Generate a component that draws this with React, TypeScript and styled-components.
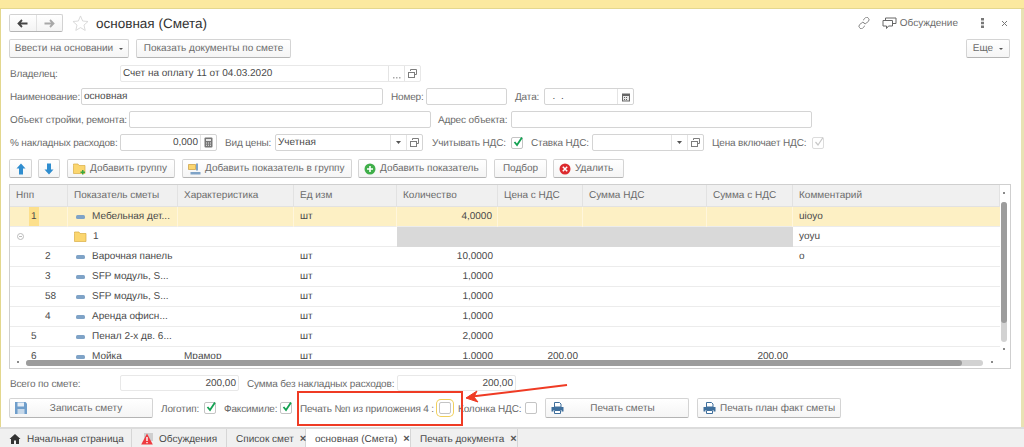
import React, { FC, ReactNode } from 'react';
import styled, { createGlobalStyle } from 'styled-components';

const TEXT = '#4a4a4a';
const LABEL = '#6b6b6b';
const BORDER = '#d4d4d4';

const GlobalStyle = createGlobalStyle`
  html, body {
    margin: 0;
    padding: 0;
    background: #fff;
  }
  body {
    width: 1024px;
    height: 447px;
    overflow: hidden;
    font-family: "Liberation Sans", Arial, sans-serif;
    font-size: 10px;
    text-rendering: geometricPrecision;
    color: ${TEXT};
  }
`;

const Page = styled.div`
  position: relative;
  width: 1024px;
  height: 447px;
  overflow: hidden;
  display: flex;
  flex-direction: column;
`;

const TopStrip = styled.div`
  height: 8px;
  flex: none;
  background: #fbe99f;
  border-bottom: 1px solid #e3d78e;
`;

const Body = styled.div`
  flex: 1;
  min-height: 0;
  border-left: 1px solid #e3d78e;
  border-right: 3px solid #e8e2b4;
  padding: 5px 10px 0 8px;
  display: flex;
  flex-direction: column;
`;

const HeaderRow = styled.div`
  height: 18px;
  display: flex;
  align-items: center;
`;

const NavGroup = styled.div`
  width: 54px;
  height: 18px;
  box-sizing: border-box;
  display: flex;
  border: 1px solid #d2d2d2;
  border-bottom-color: #b5b5b5;
  border-radius: 2px;
  background: linear-gradient(#fff, #f4f4f4);
`;

const NavButton = styled.div<{ $divider?: boolean }>`
  flex: 1;
  display: flex;
  align-items: center;
  justify-content: center;
  border-left: ${p => (p.$divider ? '1px solid #e2e2e2' : 'none')};
`;

const Title = styled.div`
  margin-left: 7px;
  font-size: 13.5px;
  color: #333;
`;

const HeaderSide = styled.div`
  margin-left: auto;
  display: flex;
  align-items: center;
  height: 18px;
`;

const HeaderLink = styled.span`
  margin-left: 3px;
  color: ${LABEL};
`;

const Row = styled.div<{ $top: number; $h?: number }>`
  display: flex;
  align-items: center;
  margin-top: ${p => p.$top}px;
  height: ${p => p.$h ?? 17}px;
  flex: none;
`;

const Label = styled.span<{ $w?: number; $ml?: number }>`
  flex: none;
  width: ${p => (p.$w ? `${p.$w}px` : 'auto')};
  margin-left: ${p => p.$ml ?? 0}px;
  margin-top: 2px;
  color: ${LABEL};
  letter-spacing: -0.15px;
  white-space: nowrap;
`;

const Field = styled.div<{ $w: number; $soft?: boolean }>`
  flex: none;
  width: ${p => p.$w}px;
  height: 100%;
  box-sizing: border-box;
  display: flex;
  align-items: stretch;
  background: #fff;
  border: 1px solid ${p => (p.$soft ? '#e8e8e8' : BORDER)};
  border-radius: 2px;
`;

const FieldText = styled.span<{ $right?: boolean }>`
  flex: 1;
  min-width: 0;
  padding: 0 2px;
  line-height: 16px;
  text-align: ${p => (p.$right ? 'right' : 'left')};
  color: ${TEXT};
  white-space: nowrap;
`;

const FieldButton = styled.span`
  flex: none;
  width: 15px;
  display: flex;
  align-items: center;
  justify-content: center;
  border-left: 1px solid #e4e4e4;
  color: #777;
`;

const Check = styled.span<{ $off?: boolean; $focus?: boolean }>`
  flex: none;
  position: relative;
  width: 12px;
  height: 12px;
  box-sizing: border-box;
  background: #fff;
  border: 1px solid ${p => (p.$off ? '#dcdcdc' : '#c4c4c4')};
  border-radius: 2px;
  box-shadow: ${p => (p.$focus ? '0 0 0 2px #fff, 0 0 0 3px #f0cf5a' : 'none')};
`;

const CheckMark = styled.svg`
  position: absolute;
  left: 0;
  top: -2px;
`;

const Button = styled.div<{ $w: number; $ml?: number; $center?: boolean }>`
  flex: none;
  width: ${p => p.$w}px;
  height: 100%;
  margin-left: ${p => p.$ml ?? 0}px;
  box-sizing: border-box;
  display: flex;
  align-items: center;
  justify-content: ${p => (p.$center ? 'center' : 'flex-start')};
  gap: 4px;
  padding: ${p => (p.$center ? '0' : '0 5px')};
  color: ${LABEL};
  background: linear-gradient(#fff, #f5f5f5);
  border: 1px solid #d4d4d4;
  border-bottom-color: #b4b4b4;
  border-radius: 2px;
  white-space: nowrap;

  svg {
    flex: none;
  }
`;

const ButtonText = styled.span`
  flex: 1;
  padding-right: 6px;
  text-align: center;
`;

const Caret = styled.span`
  display: inline-block;
  width: 0;
  height: 0;
  margin-left: 2px;
  border-left: 2px solid transparent;
  border-right: 2px solid transparent;
  border-top: 2px solid #555;
`;

const Table = styled.div`
  position: relative;
  margin-top: 6px;
  width: 1002px;
  height: 185px;
  flex: none;
  box-sizing: border-box;
  border: 1px solid #cfcfcf;
  overflow: hidden;
  background: #fff;
`;

const columns = '58px 110px 116px 103px 101px 85px 124px 86px 207px';

const HeadRow = styled.div`
  display: grid;
  grid-template-columns: ${columns};
  width: 990px;
  height: 21px;
  background: #f0f0f0;
  border-bottom: 1px solid #e2e2e2;
`;

const HeadCell = styled.div`
  padding-left: 6px;
  line-height: 21px;
  color: ${LABEL};
  border-right: 1px solid #e2e2e2;
  white-space: nowrap;
`;

const DataRow = styled.div<{ $active?: boolean }>`
  display: grid;
  grid-template-columns: ${columns};
  width: 990px;
  height: 20px;
  box-sizing: border-box;
  border-bottom: 1px solid #ececec;
  background: ${p => (p.$active ? '#fdf0c4' : '#fff')};
`;

const Cell = styled.div<{ $right?: boolean; $grey?: boolean; $active?: boolean }>`
  min-width: 0;
  height: 20px;
  display: flex;
  align-items: center;
  justify-content: ${p => (p.$right ? 'flex-end' : 'flex-start')};
  padding: ${p => (p.$right ? '0 5px 1px 0' : '0 0 1px 6px')};
  background: ${p => (p.$grey ? '#d9d9d9' : 'transparent')};
  border-right: ${p => (p.$active ? '1px solid #fff6dc' : 'none')};
  white-space: nowrap;
  overflow: hidden;
  box-sizing: border-box;
`;

const NumberText = styled.span<{ $indent: number; $mark?: boolean }>`
  margin-left: ${p => p.$indent}px;
  padding: 0 2px;
  line-height: 19px;
  background: ${p => (p.$mark ? '#fde08c' : 'transparent')};
`;

const RowIcon = styled.span`
  flex: none;
  width: 9px;
  height: 4px;
  margin: 0 7px 0 2px;
  border-radius: 1.5px;
  background: #7fa3c7;
`;

const GroupName = styled.span`
  margin-left: 6px;
`;

const ScrollFooter = styled.div`
  position: absolute;
  left: 0;
  right: 0;
  bottom: 0;
  height: 9px;
  background: #fff;
`;

const ScrollTrack = styled.div<{ $vertical?: boolean }>`
  position: absolute;
  background: #d2d2d2;
  border-radius: 3px;
  ${p =>
    p.$vertical
      ? 'right: 3px; top: 17px; width: 6px; height: 140px;'
      : 'left: 16px; bottom: 2px; width: 957px; height: 6px;'}
`;

const ScrollThumb = styled.div<{ $vertical?: boolean }>`
  background: #9c9c9c;
  border-radius: 3px;
  ${p => (p.$vertical ? 'width: 6px; height: 121px;' : 'width: 936px; height: 6px;')}
`;

const ScrollArrow = styled.span<{ $x: number; $y: number }>`
  position: absolute;
  left: ${p => p.$x}px;
  top: ${p => p.$y}px;
  width: 2px;
  height: 2px;
  background: #8a8a8a;
`;

const TabBar = styled.div`
  flex: none;
  height: 18px;
  display: flex;
  background: #f0f0f0;
  border-top: 2px solid #dcdcdc;
`;

const Tab = styled.div<{ $w: number; $active?: boolean }>`
  flex: none;
  width: ${p => p.$w}px;
  box-sizing: border-box;
  display: flex;
  align-items: center;
  padding: 2px 0 0 9px;
  gap: 6px;
  color: ${TEXT};
  background: ${p => (p.$active ? '#fff' : 'transparent')};
  border-right: 1px solid #d6d6d6;
  white-space: nowrap;

  svg {
    flex: none;
  }
`;

const TabClose = styled.span`
  font-size: 11px;
  font-weight: bold;
  color: #555;
`;

const Callout = styled.div`
  position: absolute;
  left: 297px;
  top: 391px;
  width: 166px;
  height: 35px;
  box-sizing: border-box;
  border: 2px solid #ef3b24;
  pointer-events: none;
`;

const CalloutArrow = styled.svg`
  position: absolute;
  left: 460px;
  top: 380px;
`;

const DotsIcon = () => (
  <svg width="14" height="14" viewBox="0 0 14 14">
    <path d="M3 10h1.500v1.500H3zM6 10h1.500v1.500H6zM9 10h1.500v1.500H9z" fill="#aaa" />
  </svg>
);

const CopyIcon = () => (
  <svg width="11" height="11" viewBox="0 0 11 11" fill="none" stroke="#7d7d7d">
    <path d="M3.500 3V1.500h6v5H7.500" />
    <rect x="1.500" y="4.500" width="6" height="5" fill="#fff" />
  </svg>
);

const DownIcon = () => (
  <svg width="7" height="5" viewBox="0 0 7 5">
    <path d="M1 1h5L3.500 4z" fill="#555" />
  </svg>
);

const CalendarIcon = () => (
  <svg width="10" height="10" viewBox="0 0 10 10">
    <path d="M1 1.500h8v8H1z" fill="#666" />
    <path d="M2 4h6v4.500H2z" fill="#e8e8e8" />
    <path d="M3 5h1v1H3zM5 5h1v1H5zM3 7h1v1H3zM5 7h1v1H5z" fill="#666" />
  </svg>
);

const CalcIcon = () => (
  <svg width="9" height="11" viewBox="0 0 9 11">
    <rect x="0.500" y="0.500" width="8" height="10" rx="1" fill="#777" />
    <path d="M2 2h5v2H2z" fill="#e6e6e6" />
    <path d="M2 5.500h1v1H2zM4 5.500h1v1H4zM6 5.500h1v1H6zM2 7.800h1v1H2zM4 7.800h1v1H4zM6 7.800h1v1H6z" fill="#eee" />
  </svg>
);

const ArrowIcon: FC<{ left?: boolean; color: string }> = ({ left, color }) => (
  <svg width="11" height="9" viewBox="0 0 11 9" style={left ? undefined : { transform: 'scaleX(-1)' }}>
    <path d="M5 1L1.500 4.500 5 8M2 4.500h8.500" fill="none" stroke={color} strokeWidth="1.800" />
  </svg>
);

const StarIcon = () => (
  <svg width="17" height="16" viewBox="0 0 18 17" style={{ marginLeft: 9 }}>
    <path d="M9 1l2.300 5.400 5.700.5-4.300 3.800 1.300 5.700L9 13.400l-5 3 1.300-5.700L1 6.900l5.700-.5z" fill="none" stroke="#d8d8d8" />
  </svg>
);

const LinkIcon = () => (
  <svg width="12" height="12" viewBox="0 0 13 13" fill="none" stroke="#777" strokeWidth="1">
    <path d="M5.500 3.500l2-2a2.100 2.100 0 0 1 3.800 0 2.100 2.100 0 0 1 0 3l-2 2a2 2 0 0 1-3 0" />
    <path d="M7.500 9.500l-2 2a2.100 2.100 0 0 1-3.800 0 2.100 2.100 0 0 1 0-3l2-2a2 2 0 0 1 3 0" />
  </svg>
);

const TalkIcon = () => (
  <svg width="15" height="13" viewBox="0 0 15 13" fill="none" stroke="#666" strokeWidth="1" style={{ marginLeft: 12 }}>
    <path d="M1 3.500h9.500v5.500H6.500L4.500 11.500V9H1z" />
    <path d="M3.500 3.500V1h10.500v5.500H10.500" />
  </svg>
);

const KebabIcon = () => (
  <svg width="3" height="10" viewBox="0 0 3 10" style={{ marginLeft: 23 }}>
    <path d="M0 0h3v2.500H0zM0 3.700h3v2.500H0zM0 7.500h3V10H0z" fill="#777" />
  </svg>
);

const CloseIcon = () => (
  <svg width="7" height="7" viewBox="0 0 7 7" style={{ marginLeft: 17, marginRight: 3 }}>
    <path d="M1 1l5 5M6 1L1 6" stroke="#777" strokeWidth="1" />
  </svg>
);

const BlueArrow: FC<{ up?: boolean }> = ({ up }) => (
  <svg width="10" height="12" viewBox="0 0 10 12" style={up ? undefined : { transform: 'scaleY(-1)' }}>
    <path d="M5 0.500L9.500 5.500H7V11.500H3V5.500H0.500z" fill="#2f8dcf" />
  </svg>
);

const FolderIcon: FC<{ plus?: boolean }> = ({ plus }) => (
  <svg width="13" height="12" viewBox="0 0 13 12">
    <path d="M0.500 2.500V1h4.500l1 1.500h6v8h-11.500z" fill="#fbd66f" stroke="#d9ae45" strokeWidth="0.700" />
    {plus && <path d="M7.500 8.500h1.500V7h1.500v1.500H12V10h-1.500v1.500H9V10H7.500z" fill="#3aa83f" />}
  </svg>
);

const GroupIcon = () => (
  <svg width="13" height="12" viewBox="0 0 13 12">
    <path d="M0.500 1.500h7v5h-7z" fill="#fbd66f" stroke="#c99c3c" strokeWidth="0.700" />
    <path d="M9 0.500v7" stroke="#4b7fb0" strokeWidth="1.400" />
    <path d="M2.500 9h10v2.500h-10z" fill="#7fa3c7" />
  </svg>
);

const RoundIcon: FC<{ color: string; children: ReactNode }> = ({ color, children }) => (
  <svg width="12" height="12" viewBox="0 0 12 12">
    <circle cx="6" cy="6" r="5.500" fill={color} />
    {children}
  </svg>
);

const PrinterIcon = () => (
  <svg width="13" height="12" viewBox="0 0 13 12">
    <path d="M3.500 0.500h5l1.500 1.500v3h-6.500z" fill="#fff" stroke="#3f6f9c" />
    <path d="M0.500 5h12v4.500h-2v-1.500h-8v1.500h-2z" fill="#3f6f9c" />
    <path d="M3.500 8.500h6v3h-6z" fill="#fff" stroke="#3f6f9c" />
  </svg>
);

const SaveIcon = () => (
  <svg width="12" height="12" viewBox="0 0 12 12">
    <path d="M0 0h10.500L12 1.500V12H0z" fill="#6f9ecb" />
    <path d="M2.500 0.500h6.500v4H2.500z" fill="#e6eef6" />
    <path d="M2.500 7h7v5h-7z" fill="#c7d9ea" />
  </svg>
);

const HomeIcon = () => (
  <svg width="12" height="10" viewBox="0 0 11 10">
    <path d="M5.500 0L11 5H9.500v5H6.500V6.500h-2V10H1.500V5H0z" fill="#333" />
  </svg>
);

const AlertIcon = () => (
  <svg width="12" height="12" viewBox="0 0 12 12">
    <path d="M3 0h9v8H3z" fill="#cfcfcf" />
    <path d="M6 0.500L11.800 11.500H0.200z" fill="#ee3a3f" />
    <path d="M5.300 4h1.400v4H5.300zM5.300 9h1.400v1.200H5.300z" fill="#fff" />
  </svg>
);

const GroupMark = () => (
  <svg width="7" height="7" viewBox="0 0 7 7" style={{ marginLeft: 1 }}>
    <circle cx="3.500" cy="3.500" r="3" fill="none" stroke="#bbb" />
    <path d="M2 3.500h3" stroke="#bbb" />
  </svg>
);

const Checked: FC<{ off?: boolean }> = ({ off }) => (
  <Check $off={off}>
    <CheckMark width="12" height="12" viewBox="0 0 12 12">
      <path d="M2.500 6l2.500 3 5-7.500" fill="none" stroke={off ? '#c8c8c8' : '#13a152'} strokeWidth={off ? 1.200 : 1.800} />
    </CheckMark>
  </Check>
);

const rows = [
  { n: '1', indent: 13, name: 'Мебельная дет...', unit: 'шт', qty: '4,0000', note: 'uioyo', active: true },
  { n: '', indent: 0, name: '1', note: 'yoyu', group: true },
  { n: '2', indent: 27, name: 'Варочная панель', unit: 'шт', qty: '10,0000', note: 'o' },
  { n: '3', indent: 27, name: 'SFP модуль, S...', unit: 'шт', qty: '1,0000' },
  { n: '58', indent: 27, name: 'SFP модуль, S...', unit: 'шт', qty: '1,0000' },
  { n: '4', indent: 27, name: 'Аренда офисн...', unit: 'шт', qty: '1,0000' },
  { n: '5', indent: 13, name: 'Пенал 2-х дв. 6...', unit: 'шт', qty: '2,0000' },
  { n: '6', indent: 13, name: 'Мойка', spec: 'Мрамор', unit: 'шт', qty: '1,0000', price: '200,00', sum: '200,00' },
];

const heads = ['Нпп', 'Показатель сметы', 'Характеристика', 'Ед изм', 'Количество', 'Цена с НДС', 'Сумма НДС', 'Сумма с НДС', 'Комментарий'];

export default function App() {
  return (
    <Page>
      <GlobalStyle />
      <TopStrip />
      <Body>
        <HeaderRow>
          <NavGroup>
            <NavButton><ArrowIcon left color="#444" /></NavButton>
            <NavButton $divider><ArrowIcon color="#a8a8a8" /></NavButton>
          </NavGroup>
          <StarIcon />
          <Title>основная (Смета)</Title>
          <HeaderSide>
            <LinkIcon />
            <TalkIcon />
            <HeaderLink>Обсуждение</HeaderLink>
            <KebabIcon />
            <CloseIcon />
          </HeaderSide>
        </HeaderRow>

        <Row $top={7} $h={19}>
          <Button $w={120} $center>Ввести на основании<Caret /></Button>
          <Button $w={155} $ml={7} $center>Показать документы по смете</Button>
          <Button $w={44} $ml={675} $center>Еще<Caret /></Button>
        </Row>

        <Row $top={7}>
          <Label $w={110} $ml={1}>Владелец:</Label>
          <Field $w={301} $soft>
            <FieldText>Счет на оплату 11 от 04.03.2020</FieldText>
            <FieldButton><DotsIcon /></FieldButton>
            <FieldButton><CopyIcon /></FieldButton>
          </Field>
        </Row>

        <Row $top={6}>
          <Label $w={71} $ml={1}>Наименование:</Label>
          <Field $w={302}><FieldText>основная</FieldText></Field>
          <Label $w={35} $ml={8}>Номер:</Label>
          <Field $w={81}><FieldText /></Field>
          <Label $w={29} $ml={8}>Дата:</Label>
          <Field $w={90}>
            <FieldText>&nbsp;&nbsp;.&nbsp;&nbsp;.</FieldText>
            <FieldButton><CalendarIcon /></FieldButton>
          </Field>
        </Row>

        <Row $top={6}>
          <Label $w={119} $ml={1}>Объект стройки, ремонта:</Label>
          <Field $w={302}><FieldText /></Field>
          <Label $w={73} $ml={7}>Адрес объекта:</Label>
          <Field $w={301}><FieldText /></Field>
        </Row>

        <Row $top={6}>
          <Label $w={110} $ml={1}>% накладных расходов:</Label>
          <Field $w={97}>
            <FieldText $right>0,000</FieldText>
            <FieldButton><CalcIcon /></FieldButton>
          </Field>
          <Label $w={50} $ml={8}>Вид цены:</Label>
          <Field $w={148}>
            <FieldText>Учетная</FieldText>
            <FieldButton><DownIcon /></FieldButton>
            <FieldButton><CopyIcon /></FieldButton>
          </Field>
          <Label $w={79} $ml={9}>Учитывать НДС:</Label>
          <Checked />
          <Label $w={61} $ml={8}>Ставка НДС:</Label>
          <Field $w={112}>
            <FieldText />
            <FieldButton><DownIcon /></FieldButton>
            <FieldButton><CopyIcon /></FieldButton>
          </Field>
          <Label $w={100} $ml={8}>Цена включает НДС:</Label>
          <Checked off />
        </Row>

        <Row $top={8} $h={19}>
          <Button $w={23} $center><BlueArrow up /></Button>
          <Button $w={22} $ml={6} $center><BlueArrow /></Button>
          <Button $w={108} $ml={7}><FolderIcon plus /><span>Добавить группу</span></Button>
          <Button $w={170} $ml={7}><GroupIcon /><span>Добавить показатель в группу</span></Button>
          <Button $w={129} $ml={6}>
            <RoundIcon color="#3fae49"><path d="M3 5.200h2.200V3h1.600v2.200H9v1.600H6.800V9H5.200V6.800H3z" fill="#fff" /></RoundIcon>
            <span>Добавить показатель</span>
          </Button>
          <Button $w={53} $ml={7} $center>Подбор</Button>
          <Button $w={71} $ml={6}>
            <RoundIcon color="#dc2a2e"><path d="M3.800 3.800l4.400 4.400M8.200 3.800L3.800 8.200" stroke="#fff" strokeWidth="1.500" /></RoundIcon>
            <span>Удалить</span>
          </Button>
        </Row>

        <Table>
          <HeadRow>
            {heads.map(h => <HeadCell key={h}>{h}</HeadCell>)}
          </HeadRow>
          {rows.map((r, i) => (
            <DataRow key={i} $active={r.active}>
              <Cell $active={r.active}>
                {r.group ? <GroupMark /> : <NumberText $indent={r.indent} $mark={r.active}>{r.n}</NumberText>}
              </Cell>
              <Cell $active={r.active}>
                {r.group
                  ? <><FolderIcon /><GroupName>{r.name}</GroupName></>
                  : <><RowIcon /><span>{r.name}</span></>}
              </Cell>
              <Cell $active={r.active}>{r.spec}</Cell>
              <Cell $active={r.active}>{r.unit}</Cell>
              <Cell $right $grey={r.group} $active={r.active}>{r.qty}</Cell>
              <Cell $right $grey={r.group} $active={r.active}>{r.price}</Cell>
              <Cell $right $grey={r.group} $active={r.active} />
              <Cell $right $grey={r.group} $active={r.active}>{r.sum}</Cell>
              <Cell>{r.note}</Cell>
            </DataRow>
          ))}
          <ScrollFooter />
          <ScrollTrack $vertical><ScrollThumb $vertical /></ScrollTrack>
          <ScrollTrack><ScrollThumb /></ScrollTrack>
          <ScrollArrow $x={993} $y={7} />
          <ScrollArrow $x={993} $y={163} />
          <ScrollArrow $x={7} $y={176} />
          <ScrollArrow $x={981} $y={176} />
        </Table>

        <Row $top={6} $h={16}>
          <Label $w={110} $ml={1}>Всего по смете:</Label>
          <Field $w={119} $soft><FieldText $right>200,00</FieldText></Field>
          <Label $w={150} $ml={8}>Сумма без накладных расходов:</Label>
          <Field $w={119} $soft><FieldText $right>200,00</FieldText></Field>
        </Row>

        <Row $top={7} $h={20}>
          <Button $w={144}><SaveIcon /><ButtonText>Записать смету</ButtonText></Button>
          <Label $w={43} $ml={8}>Логотип:</Label>
          <Checked />
          <Label $w={56} $ml={8}>Факсимиле:</Label>
          <Checked />
          <Label $w={139} $ml={8}>Печать №п из приложения 4 :</Label>
          <Check $focus />
          <Label $w={67} $ml={7}>Колонка НДС:</Label>
          <Check />
          <Button $w={144} $ml={8}><PrinterIcon /><ButtonText>Печать сметы</ButtonText></Button>
          <Button $w={144} $ml={8}><PrinterIcon /><ButtonText>Печать план факт сметы</ButtonText></Button>
        </Row>
      </Body>

      <TabBar>
        <Tab $w={132}><HomeIcon /><span>Начальная страница</span></Tab>
        <Tab $w={95}><AlertIcon /><span>Обсуждения</span></Tab>
        <Tab $w={79}><span>Список смет</span><TabClose>×</TabClose></Tab>
        <Tab $w={105} $active><span>основная (Смета)</span><TabClose>×</TabClose></Tab>
        <Tab $w={107}><span>Печать документа</span><TabClose>×</TabClose></Tab>
      </TabBar>

      <Callout />
      <CalloutArrow width="112" height="24" viewBox="0 0 112 24">
        <path d="M107 5L12 16.500" stroke="#ef3b24" strokeWidth="2" fill="none" />
        <path d="M6 18l11-7-3 6 4 5z" fill="#ef3b24" stroke="#ef3b24" />
      </CalloutArrow>
    </Page>
  );
}
